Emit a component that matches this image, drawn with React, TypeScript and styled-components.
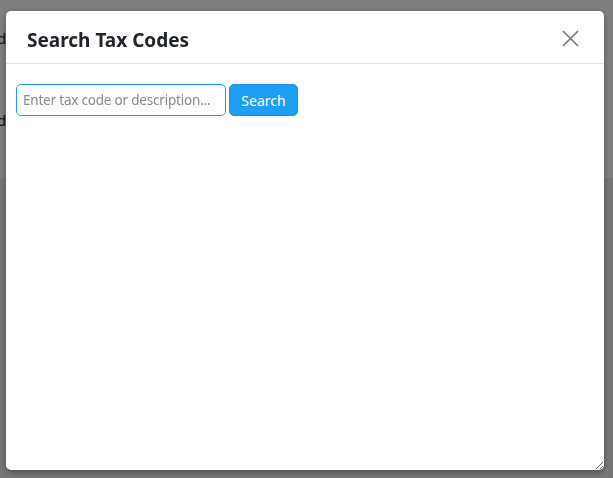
import React from "react";
import styled, { createGlobalStyle } from "styled-components";

const Global = createGlobalStyle`
  html, body { margin: 0; padding: 0; }
  body {
    width: 613px;
    height: 478px;
    overflow: hidden;
    background: #ffffff;
    font-family: "Noto Sans", "Open Sans", "Liberation Sans", sans-serif;
  }
  * { box-sizing: border-box; }
`;

const Page = styled.div`
  display: flex;
  flex-direction: column;
  height: 478px;
`;

const PageTop = styled.div`
  height: 178px;
  background: #ffffff;
  display: flex;
  flex-direction: column;
  gap: 62px;
  padding-top: 28px;
`;

const PageBottom = styled.div`
  flex: 1;
  background: #eeeeee;
`;

const PageLabel = styled.div`
  margin-left: -27px;
  font-size: 15px;
  color: #222;
  line-height: 20px;
`;

const Overlay = styled.div`
  position: fixed;
  inset: 0;
  background: rgba(0, 0, 0, 0.5);
  padding: 11px 0 0 6px;
`;

const Modal = styled.div`
  width: 598px;
  height: 459px;
  background: #ffffff;
  border-radius: 5px;
  box-shadow: 0 2px 6px rgba(0, 0, 0, 0.35);
  display: flex;
  flex-direction: column;
  resize: both;
  overflow: auto;
`;

const Header = styled.div`
  height: 53px;
  flex: 0 0 53px;
  display: flex;
  align-items: center;
  justify-content: space-between;
  padding: 5px 24px 0 21px;
  border-bottom: 1px solid #dee2e6;
`;

const Title = styled.h2`
  margin: 0;
  font-size: 19px;
  font-weight: 700;
  color: #212529;
  letter-spacing: 0;
`;

const CloseButton = styled.button`
  border: 0;
  background: transparent;
  padding: 0;
  width: 20px;
  height: 20px;
  display: flex;
  align-items: center;
  justify-content: center;
  cursor: pointer;
  margin-top: -3px;
`;

const Body = styled.div`
  padding: 20px 10px;
  display: flex;
  gap: 3px;
  align-items: flex-start;
`;

const SearchInput = styled.input`
  width: 210px;
  height: 32px;
  border: 1px solid #1e9bf0;
  border-radius: 5px;
  padding: 0 6px;
  font-family: inherit;
  font-size: 13.5px;
  letter-spacing: -0.2px;
  color: #212529;
  outline: none;
  &::placeholder { color: #8a8a8a; }
`;

const SearchButton = styled.button`
  height: 32px;
  width: 69px;
  background: #1e9ef5;
  border: 1px solid #1a8ee0;
  border-radius: 5px;
  color: #ffffff;
  font-family: inherit;
  font-size: 14px;
  cursor: pointer;
`;

export default function App() {
  return (
    <>
      <Global />
      <Page>
        <PageTop>
          <PageLabel>Field</PageLabel>
          <PageLabel>Field</PageLabel>
        </PageTop>
        <PageBottom />
      </Page>
      <Overlay>
        <Modal>
          <Header>
            <Title>Search Tax Codes</Title>
            <CloseButton aria-label="Close">
              <svg width="17" height="17" viewBox="0 0 17 17">
                <path d="M1 1 L16 16 M16 1 L1 16" stroke="#777" strokeWidth="1.6" fill="none" />
              </svg>
            </CloseButton>
          </Header>
          <Body>
            <SearchInput placeholder="Enter tax code or description..." autoFocus />
            <SearchButton>Search</SearchButton>
          </Body>
        </Modal>
      </Overlay>
    </>
  );
}
